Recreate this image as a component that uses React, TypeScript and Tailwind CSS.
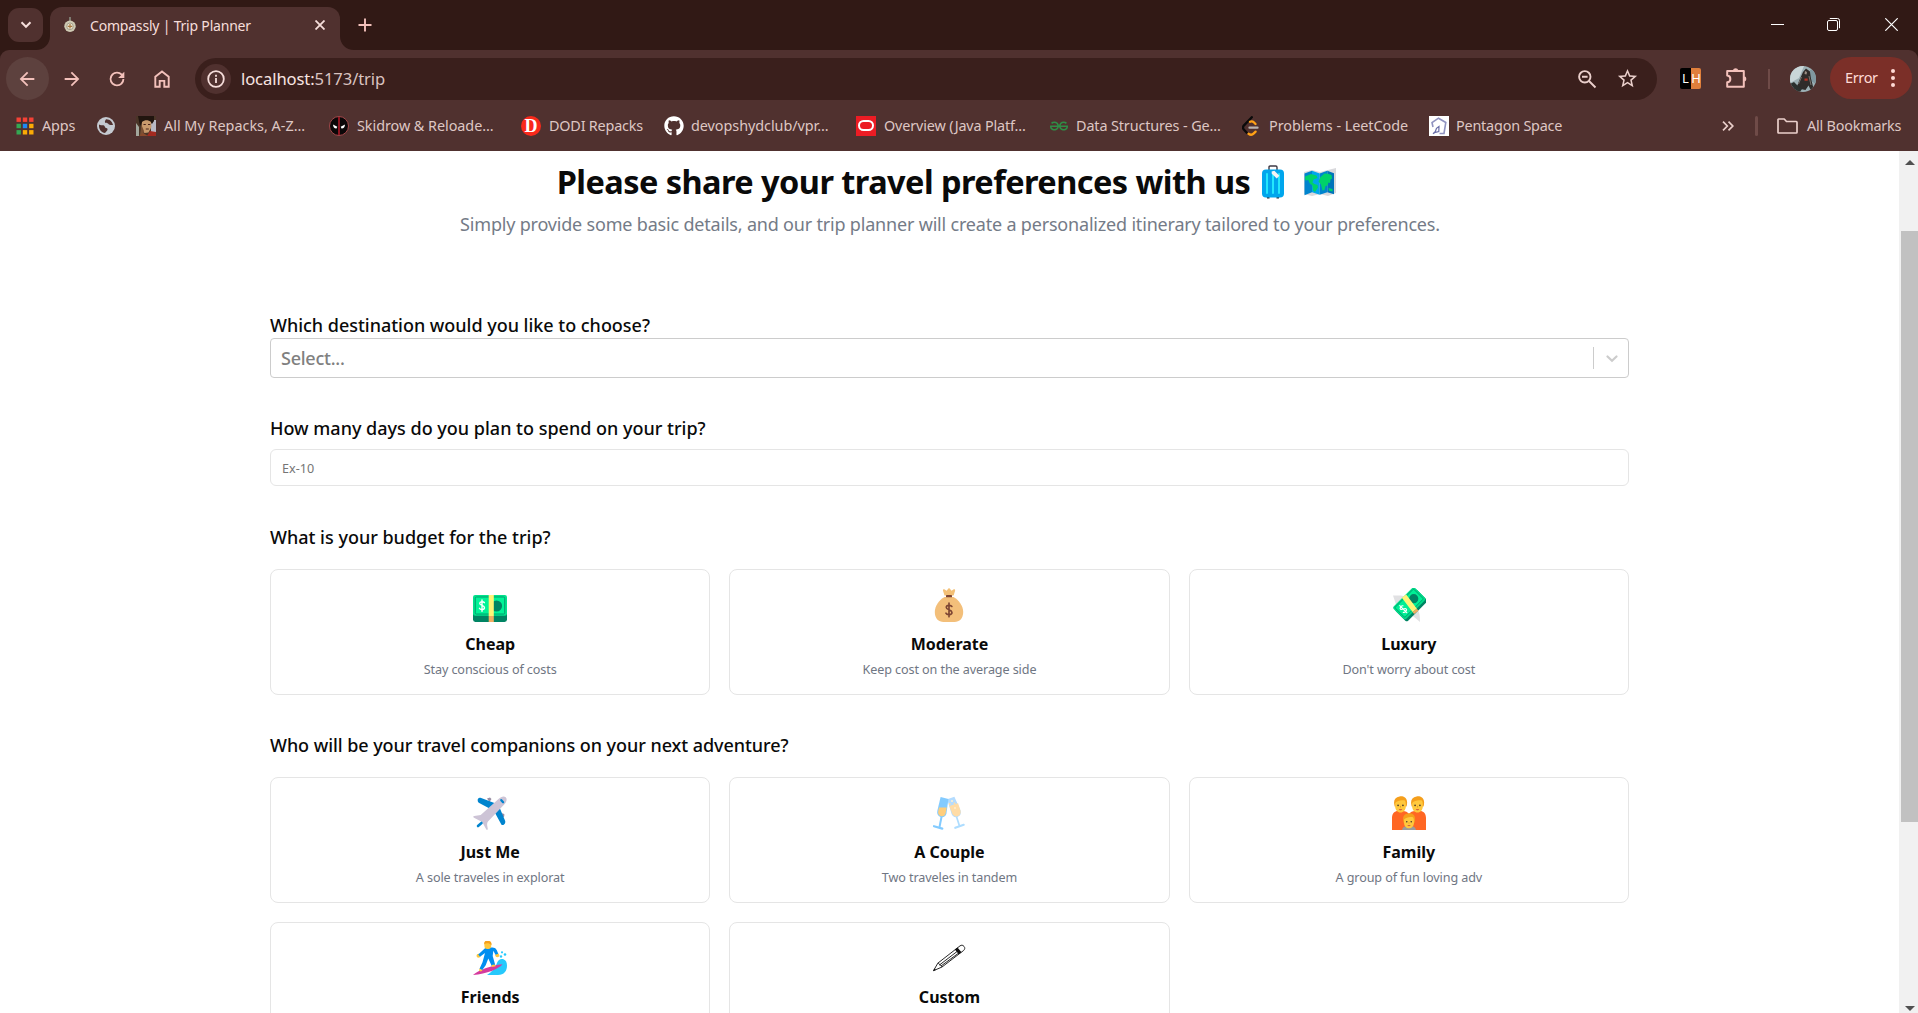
import React from 'react';
import { FaGithub } from 'react-icons/fa';
import { SiGeeksforgeeks } from 'react-icons/si';

/* ---------- emoji artwork, each on a 34 x 34 grid ---------- */

const Art = ({ children }: { children: React.ReactNode }) => (
  <svg viewBox="0 0 34 34" className="block h-[34px] w-[34px] shrink-0">
    {children}
  </svg>
);

const DollarMark = ({ x, y, s, color }: { x: number; y: number; s: number; color: string }) => (
  <g transform={`translate(${x} ${y}) scale(${s})`} fill="none" stroke={color} strokeWidth="1.5" strokeLinecap="round">
    <path d="M2.6 -3.2C1.8 -4.6 -2.4 -4.8 -2.5 -2.4C-2.6 0 2.7 -.3 2.7 2.3C2.7 4.8 -1.9 4.7 -2.8 2.9M0 -6.2V6.2" />
  </g>
);

const Suitcase = () => (
  <Art>
    <path d="M13 6V2.200c0-.7.4-1.200 1.200-1.200h5.600c.8 0 1.200.5 1.200 1.200V6" fill="none" stroke="#3f3a45" strokeWidth="1.400" />
    <path d="M10.500 31h3v2.600h-2.400zM20.500 31h3l-.6 2.600h-2.400z" fill="#2b2730" />
    <rect x="6" y="4.600" width="22" height="27.800" rx="4" fill="#00a6ed" />
    <path d="M11 9v19M17 9v19M23 9v19" stroke="#26eafc" strokeWidth="1.900" strokeLinecap="round" />
    <path d="M15.600 6.600l2.800-.8 5 5-2.600 2.800-5-4.900z" fill="#f4f4f4" />
  </Art>
);

const WorldMap = () => (
  <Art>
    <path d="M1 7l8-2 8 2 8-2 8-2v25l-8 3-8-2-8 2-8-2z" fill="#d9d9dc" />
    <path d="M1.500 8.500L9 5.800v21.400l-7.500 3z" fill="#0084ce" />
    <path d="M9 5.800l7.700 2.700v21.200L9 27.200z" fill="#00a6ed" />
    <path d="M16.700 8.500l7.600-2.700v21.400l-7.600 2.500z" fill="#0084ce" />
    <path d="M24.300 5.800l6.700 2.400v21l-6.700-2z" fill="#0074ba" />
    <path d="M2 11.500l6-2.500 5.500 1.500 1 2.500-4 1.500-1 3 2 1.500 3 1 .5 2.500-3 4.500-2-1.500-.6-5-2.600-2-1.500-3.500-3 .5zM17.500 12l4-3.500 3.500.2 3.500 1.300.5 3.500-1.500 1-.5 3.500-1.500-.5-1 3-2 .5-1 4-2 .5-1.500-6-2.500-3zM25.500 23l4 1v2.500l-3.500-.8z" fill="#00d26a" />
  </Art>
);

const Cash = () => (
  <Art>
    <rect x="0" y="10" width="34" height="24" rx="2.400" fill="#008463" />
    <rect x="0" y="7" width="34" height="20.800" rx="2.200" fill="#00e28c" />
    <rect x="2.300" y="9" width="29.400" height="17" rx="1.200" fill="#00f397" stroke="#00a06f" strokeWidth="1" />
    <circle cx="23.500" cy="18" r="5.600" fill="#008463" />
    <rect x="15.700" y="7" width="5.100" height="21" fill="#fff478" />
    <rect x="15.700" y="28" width="5.100" height="6" fill="#f3ad61" />
    <DollarMark x={9} y={17.600} s={0.920} color="#ffffff" />
  </Art>
);

const MoneyBag = () => (
  <Art>
    <path d="M12.500 7.500L11 2.700c-.3-1.200.8-1.700 1.700-1.100l1.900 1.200 1.600-2c.5-.6 1.200-.6 1.700 0l1.600 2 1.900-1.200c.9-.6 2 0 1.700 1.100l-1.500 4.800z" fill="#f3c077" />
    <path d="M12.500 9h9C27 12 31.200 18 31.200 24c0 6.500-3.700 10-8.700 10h-11C6.500 34 2.800 30.500 2.800 24 2.800 18 7 12 12.500 9z" fill="#f3bf7a" />
    <rect x="14" y="7" width="6" height="2.300" rx=".6" fill="#7d4533" />
    <DollarMark x={17} y={22} s={1.100} color="#7d4533" />
  </Art>
);

const FlyingMoney = () => (
  <Art>
    <path d="M1 7.500c4 0 6.500-.3 9.500.2l15.600 14.800c1.500 2 1.900 6 1.900 11.500l-6.500-5.500L4 16.500z" fill="#e1e1e3" />
    <g transform="translate(17.700 15.800) rotate(-45)">
      <rect x="-15" y="-6.200" width="30" height="17" rx="2" fill="#008463" />
      <rect x="-15" y="-9.400" width="30" height="17.600" rx="2" fill="#00dc89" />
      <rect x="-13.200" y="-7.800" width="26.400" height="14" rx="1" fill="#00ef95" stroke="#009f6e" strokeWidth=".9" />
      <circle cx="6.500" cy="-.8" r="4.600" fill="#008463" />
      <g transform="rotate(8)">
        <rect x="-2.600" y="-9.600" width="5.400" height="17.800" fill="#fff478" />
        <rect x="-2.600" y="8.200" width="5.400" height="2.600" fill="#f3ad61" />
      </g>
      <DollarMark x={-8.300} y={-.8} s={0.800} color="#ffffff" />
    </g>
  </Art>
);

const Plane = () => (
  <Art>
    <path d="M14 2.500l3-.9 1.500 1.500-2 3zM29.500 17l2 1.500-.5 2.500-3-.5z" fill="#998ea4" />
    <path d="M24 8L7.500 1.800C5.500 1.200 4.500 3 4.700 4.500c.1 1.300.8 2.200 2 2.700L17.500 13zM25.500 9l6.500 15.500c.9 2-.3 4.500-2.200 4.500-1 0-1.600-.6-2-1.600L21.500 16z" fill="#0084ce" />
    <path d="M25.500 3c2.500-2.400 5.500-3.200 7.200-1.700 1.700 1.600 1 4.500-1.500 7.200L15 25.500c-.9 1-1 2.200-.8 4l.6 3.500c.1.900-.9 1.200-1.500.5L9.200 26 1 21.800C0 21.200 0 20.300 1.200 20l6.500-1z" fill="#cdc4d6" />
    <path d="M8.500 27L5 30" stroke="#0084ce" strokeWidth="2.600" strokeLinecap="round" />
    <path d="M28.300 4.200l1.800 2" stroke="#0084ce" strokeWidth="2.300" strokeLinecap="round" />
  </Art>
);

const Glasses = () => (
  <Art>
    <path d="M24.300 20l3.200 10" stroke="#aeddff" strokeWidth="1.700" />
    <path d="M23.300 31.800l8.400-3" stroke="#aeddff" strokeWidth="2.200" strokeLinecap="round" />
    <path d="M15.200 3.300L22.400.7l6.200 13.800c.8 3.200-.4 5.700-3.200 6.500-2.800.8-5-.8-5.800-3z" fill="#b4dcff" />
    <path d="M17.300 10l8.800-2.800 2.400 7.500c.5 2.800-.6 4.800-3 5.500-2.500.7-4.500-.7-5.300-2.700z" fill="#ffdca6" />
    <path d="M9.700 20L7.500 31" stroke="#83cbff" strokeWidth="2" />
    <path d="M2 30.200l8.300 2.400" stroke="#83cbff" strokeWidth="2.200" strokeLinecap="round" />
    <path d="M8.600 1l7.800 2-2 14.800c-.8 2.600-3 3.800-5.600 3.200-2.800-.7-4.100-3-3.500-6z" fill="#83cbff" />
    <path d="M7 11.500h7.800l-1.300 6.300c-.6 2-2.400 2.900-4.400 2.400-2.200-.5-3.300-2.300-2.900-4.700z" fill="#ffce7c" />
    <circle cx="20" cy="5" r="1" fill="#fff1d0" />
    <circle cx="17.700" cy="8" r=".9" fill="#ffdca6" />
    <circle cx="22.500" cy="7.500" r="1" fill="#ffdca6" />
    <circle cx="23" cy="12" r=".9" fill="#fff1d0" />
  </Art>
);

const Face = ({ x, y, s }: { x: number; y: number; s: number }) => (
  <g transform={`translate(${x} ${y}) scale(${s})`}>
    <path d="M-6.300 1C-7.500-4-5.500-7 -1-7.700 1-8.500 6.500-8 6.800-2c.1 2-.3 3.500-.6 4.500H-6z" fill="#f59f1c" />
    <path d="M-5.500-1C-3.500-3.800 2-4.500 4.500-3.500 5.400-2.500 5.600 0 5.500 2.500 5.500 6 3 8.700 0 8.700S-5.500 6-5.500 2.500z" fill="#ffc83d" />
    <circle cx="-2.500" cy="1.400" r=".9" fill="#4b3a2a" />
    <circle cx="2.500" cy="1.400" r=".9" fill="#4b3a2a" />
    <path d="M0 2v1.600" stroke="#e59f20" strokeWidth="1" />
    <path d="M-1.700 5.400h3.400c-.3 1.300-3.100 1.300-3.400 0z" fill="#c9443f" />
  </g>
);

const Family = () => (
  <Art>
    <path d="M0 34V22c0-4.500 2.600-7 6-7h5c2.500 0 4.600 1 6 3 1.400-2 3.500-3 6-3h5c3.400 0 6 2.500 6 7v12z" fill="#ff6723" />
    <Face x={8.500} y={8} s={0.970} />
    <Face x={25.500} y={8} s={0.970} />
    <path d="M10 34c.5-3 3-4.300 7-4.300s6.500 1.300 7 4.300z" fill="#9b9b9b" />
    <Face x={17} y={24.500} s={0.900} />
  </Art>
);

const Surfer = () => (
  <Art>
    <path d="M14 34c5-3 8.500-7 10-12 1.200-3.500 4-4.700 6.500-3.800C33 19 34 21.500 34 24.500c0 5.500-3 9.500-9 9.500z" fill="#26c9fc" />
    <circle cx="29" cy="11.300" r="1.100" fill="#26c9fc" />
    <circle cx="32" cy="13.500" r="1.300" fill="#26c9fc" />
    <circle cx="28" cy="15.500" r="1.200" fill="#26c9fc" />
    <path d="M0 34c5-4.500 18-9.500 29.500-10.700-3 4.200-16 10-29.500 10.700z" fill="#d53a9d" />
    <circle cx="5.500" cy="14.800" r="2" fill="#ffc83d" />
    <circle cx="24.300" cy="14.300" r="2" fill="#ffc83d" />
    <path d="M15 6.500h4.500c3.500 0 4.700 3 5.700 6.300l-2.700.9-2.200-4-.6 5.300 2.600 9.300-3.600.6-3.400-7.300-2.600 6.700-3.600 5-2.600-1.500 3-6.600L12 12l-5 3.700-1.800-2.300 6-5.400c1-1 2.300-1.500 3.800-1.500z" fill="#008ef0" />
    <path d="M6.500 27.500l3 1.800-1.500 1.200-2-.7zM18.500 24l3.200-.5 1 1.700-3.600.8z" fill="#ffc83d" />
    <rect x="11.400" y="0" width="6.800" height="8" rx="3" fill="#ffc83d" />
    <path d="M11.200 3.500C11-.2 13-.5 15-.2c2.500.2 4 1.500 3.400 4.500C16 2 13.500 1.700 11.200 3.500z" fill="#f59f1c" />
  </Art>
);

const Pencil = () => (
  <Art>
    <g fill="none" stroke="#111" strokeWidth=".9">
      <path d="M1.500 29.700l4.300-7.500L28 4.900c1.500-1.100 2.800-.9 4 .5s.9 2.800-.4 4.100L10 26z" fill="#fff" />
      <path d="M5.800 22.200c1.300.2 1.700.8 1.800 1.700 1.100.2 2 .8 2.400 2.100M7.600 23.900L25.200 10.400M9 25L27 11.800" />
    </g>
    <path d="M22.800 8.600l2.700-2.100 4 4.700-2.700 2.100zM1 30l1.400-2.600 1.600 1.700z" fill="#111" />
  </Art>
);

/* ---------- browser chrome ---------- */

const Mat = ({ d, className }: { d: string; className?: string }) => (
  <svg viewBox="0 0 24 24" fill="currentColor" className={className ?? 'mr-px h-[22px] w-[22px]'}>
    <path d={d} />
  </svg>
);

const AppsGrid = () => (
  <svg viewBox="0 0 18 18" className="h-[18px] w-[18px]">
    {['#f44236', '#f44236', '#f44236', '#34a853', '#1e88f5', '#fbab05', '#34a853', '#fbab05', '#fbab05'].map((c, i) => (
      <rect key={i} x={0.500 + (i % 3) * 6.300} y={0.500 + Math.floor(i / 3) * 6.300} width="4.400" height="4.400" fill={c} />
    ))}
  </svg>
);

const Globe = () => (
  <svg viewBox="0 0 18 18" className="h-[18px] w-[18px]">
    <circle cx="9" cy="9" r="9" fill="#c5cad1" />
    <path d="M2 7.500C3.500 8.500 5 8 6.500 8.300 8 8.800 7.500 10.500 9 11c1.500.3 2 1 1.200 2.500-.7 1-1.500 1.800-2.200 2.500C4.500 15.500 2 12.500 2 9zM9 2.200C8.500 3.500 7.500 4 8 5.200c.8 1.300 2.500.5 3.300 1.500.8 1.300 2.400 1.400 4.700 1.300C15.500 5 13 2 9 2.200z" fill="#50312f" />
  </svg>
);

const Portrait = () => (
  <svg viewBox="0 0 20 20" className="h-5 w-5">
    <rect width="20" height="20" fill="#4a3527" />
    <path d="M15 4h5v16h-5z" fill="#b9bac6" />
    <path d="M0 7l3 4v9H0z" fill="#a3a79d" />
    <path d="M2 0h16v5l-2 3-3-3-6 0-3 5z" fill="#21150f" />
    <path d="M6 6c3-2.500 6.500-2 9 0l.5 5-3 5.500-4 .5-3-4z" fill="#c99a6d" />
    <path d="M5.500 9L8 15l-1 4H4z" fill="#7b4f33" />
    <path d="M11 20l3-5 6 1v4z" fill="#a32a20" />
    <path d="M3 20l4-3 5 3z" fill="#8a4a2c" />
    <path d="M7.500 8.500h2.300M12 8.500h2.300M9.800 13h3" stroke="#4a241b" strokeWidth="1" />
  </svg>
);

const Mask = () => (
  <svg viewBox="0 0 20 20" className="h-5 w-5">
    <circle cx="10" cy="10" r="9.500" fill="#0b0708" stroke="#a3474a" strokeWidth="1" />
    <path d="M9 1h2v18H9z" fill="#8d1420" />
    <path d="M4 8.500l4.300 2.300-.8 1.800c-2 .2-3.300-1.300-3.500-4.100zM16 8.500l-4.300 2.300.8 1.800c2 .2 3.300-1.300 3.500-4.100z" fill="#fff" />
  </svg>
);

const Dodi = () => (
  <span className="flex h-5 w-5 items-center justify-center rounded-full bg-[#f9291b] font-['Liberation_Serif',serif] text-[18px] leading-none font-bold text-white">
    D
  </span>
);

const Oracle = () => (
  <span className="flex h-5 w-5 items-center justify-center bg-[#ec1c24]">
    <span className="h-[11px] w-4 rounded-full border-2 border-white" />
  </span>
);

const Leet = () => (
  <svg viewBox="0 0 18 20" className="h-5 w-[18px]" fill="none" strokeWidth="2.300" strokeLinecap="round">
    <path d="M9.800 1.200L1.800 9.600c-1 1.200-1 2.700 0 3.900l3 3.200" stroke="#0a0a0a" />
    <path d="M8 5.800c1.500-.8 2.700-.6 3.800.5l1.700 1.700M6.500 17.800c1.700 1.200 4 1 5.300-.4l1.800-1.800" stroke="#ffa116" />
    <path d="M7.500 11.700h8" stroke="#b9b3b1" />
  </svg>
);

const PentagonLogo = () => (
  <svg viewBox="0 0 20 20" className="h-5 w-5" fill="none">
    <rect width="20" height="20" fill="#fff" />
    <path d="M4 11L3 6.500l6.500-4.300 7.300 4.300L15 17.500h-4.500" stroke="#9093c0" strokeWidth="1.600" />
    <path d="M4 17.800l2.300-1.500 3.500-.8.200-5-2.500 1.800-1.300 3.500z" stroke="#6a6ea8" strokeWidth="1.200" />
  </svg>
);

const bookmarks = [
  { icon: <AppsGrid />, text: 'Apps', slot: 'w-[81px]', box: 'w-[18px]', track: 'tracking-[-0.1px]' },
  { icon: <Globe />, text: '', slot: 'w-[39px]', box: 'w-[18px]', track: '' },
  { icon: <Portrait />, text: 'All My Repacks, A-Z...', slot: 'w-[193px]', box: 'w-5', track: '' },
  { icon: <Mask />, text: 'Skidrow & Reloade...', slot: 'w-[192px]', box: 'w-5', track: 'tracking-[-0.05px]' },
  { icon: <Dodi />, text: 'DODI Repacks', slot: 'w-[143px]', box: 'w-5', track: 'tracking-[-0.2px]' },
  { icon: <FaGithub className="h-5 w-5 text-white" />, text: 'devopshydclub/vpr...', slot: 'w-[192px]', box: 'w-5', track: 'tracking-[-0.05px] -ml-px' },
  { icon: <Oracle />, text: 'Overview (Java Platf...', slot: 'w-[193px]', box: 'w-5', track: 'tracking-[-0.15px]' },
  { icon: <SiGeeksforgeeks className="h-[18px] w-[18px] text-[#2f8d46]" />, text: 'Data Structures - Ge...', slot: 'w-[192px]', box: 'w-5', track: 'tracking-[-0.12px] -ml-px' },
  { icon: <Leet />, text: 'Problems - LeetCode', slot: 'w-[188px]', box: 'w-5', track: 'tracking-[-0.05px]' },
  { icon: <PentagonLogo />, text: 'Pentagon Space', slot: 'w-[160px]', box: 'w-5', track: 'tracking-[-0.2px] -ml-px' },
];

function TabStrip() {
  return (
    <div className="flex h-[50px] shrink-0 bg-[#311915]">
      <div className="mt-2 ml-2 flex h-[34px] w-[35px] items-center justify-center rounded-[11px] bg-[#50312f]">
        <svg viewBox="0 0 12 8" className="h-2 w-3" fill="none" stroke="#f6dedb" strokeWidth="2">
          <path d="M1.500 1.300L6 5.800l4.500-4.500" />
        </svg>
      </div>
      <div className="relative mt-[7px] ml-[7px] flex h-[43px] w-[290px] items-center rounded-t-[12px] bg-[#50312f]">
        <svg viewBox="0 0 14 14" className="absolute bottom-0 -left-[14px] h-[14px] w-[14px] fill-[#50312f]"><path d="M14 0v14H0C8 14 14 8 14 0z" /></svg>
        <svg viewBox="0 0 14 14" className="absolute -right-[14px] bottom-0 h-[14px] w-[14px] fill-[#50312f]"><path d="M0 0v14h14C6 14 0 8 0 0z" /></svg>
        <svg viewBox="0 0 14 16" className="mb-2 ml-[13px] h-4 w-[14px]">
          <path d="M7 0v4" stroke="#7d7a70" strokeWidth="2" />
          <circle cx="7" cy="9.300" r="5.700" fill="#cfcab4" />
          <circle cx="7" cy="9.300" r="3.300" fill="#e9e3cf" stroke="#8a8573" strokeWidth=".7" />
          <path d="M7 7v4.600M4.700 9.300h4.600" stroke="#a5763f" strokeWidth="1.200" />
        </svg>
        <span className="mb-[5px] ml-[13px] text-[14px] leading-5 tracking-[-0.2px] text-[#f6dedb]">Compassly | Trip Planner</span>
        <svg viewBox="0 0 10 10" className="mr-[15px] mb-[7px] ml-auto h-[10px] w-[10px]" stroke="#f6dedb" strokeWidth="1.800">
          <path d="M.5.5l9 9M9.500.5l-9 9" />
        </svg>
      </div>
      <svg viewBox="0 0 14 14" className="mt-[18px] ml-[18px] h-[14px] w-[14px]" stroke="#f3c1bb" strokeWidth="1.900">
        <path d="M7 .5v13M.5 7h13" />
      </svg>
      <div className="mt-[18px] mr-5 ml-auto flex text-white">
        <svg viewBox="0 0 13 13" className="h-[13px] w-[13px]" stroke="currentColor"><path d="M0 6.500h13" /></svg>
        <svg viewBox="0 0 13 13" className="mr-[45px] ml-[43px] h-[13px] w-[13px]" fill="none" stroke="currentColor">
          <rect x=".5" y="2.500" width="10" height="10" rx="1.500" />
          <path d="M2.800.5h7.700a2 2 0 012 2v7.700" />
        </svg>
        <svg viewBox="0 0 13 13" className="h-[13px] w-[13px]" stroke="currentColor" strokeWidth="1.200"><path d="M.3.3l12.400 12.400M12.700.3L.3 12.700" /></svg>
      </div>
    </div>
  );
}

function Toolbar() {
  return (
    <div className="flex h-[50px] items-center pt-[7px] pl-[5px] text-[#f3c1bb]">
      <div className="flex h-[43px] w-[45px] items-center justify-center">
        <span className="flex h-[43px] w-[43px] items-center justify-center rounded-full bg-[#5d413e]">
          <Mat d="M20 11H7.830l5.590-5.590L12 4l-8 8 8 8 1.410-1.410L7.830 13H20v-2z" />
        </span>
      </div>
      <div className="flex w-[45px] justify-center">
        <Mat d="M4 11h12.170l-5.590-5.590L12 4l8 8-8 8-1.410-1.410L16.170 13H4v-2z" />
      </div>
      <div className="flex w-[45px] justify-center">
        <Mat d="M17.650 6.350A7.960 7.960 0 0012 4a8 8 0 108 8h-2a6 6 0 11-1.600-4.070L13.200 11H20V4z" />
      </div>
      <div className="flex w-[45px] justify-center">
        <svg viewBox="0 0 16 18" className="mr-px h-[18px] w-4" fill="none" stroke="currentColor" strokeWidth="1.900">
          <path d="M1.300 16.700V6.800L8 1.400l6.700 5.400v9.900h-4.400v-5.800H5.700v5.800z" />
        </svg>
      </div>
      <div className="ml-[10px] flex h-[42px] w-[1462px] items-center rounded-full bg-[#3a1f1c] pr-[18px] pl-[6px] text-[#eacfcb]">
        <span className="flex h-[30px] w-[30px] items-center justify-center rounded-full bg-[#50312f]">
          <svg viewBox="0 0 18 18" className="h-[18px] w-[18px]" fill="none" stroke="#f6dedb" strokeWidth="1.800">
            <circle cx="9" cy="9" r="7.800" />
            <path d="M9 8v5M9 4.800v1.900" />
          </svg>
        </span>
        <span className="mt-px ml-[10px] text-[16.600px] leading-6 tracking-[-0.1px] text-[#d9c3c0]">
          <span className="text-[#f8e4e1]">localhost:</span>5173/trip
        </span>
        <svg viewBox="0 0 20 20" className="mr-[19px] ml-auto h-5 w-5" fill="none" stroke="currentColor" strokeWidth="1.900">
          <circle cx="7.800" cy="7.800" r="5.700" />
          <path d="M12 12l6.500 6.500M5 7.800h5.600" />
        </svg>
        <Mat className="h-[23px] w-[23px]" d="M22 9.240l-7.190-.62L12 2 9.190 8.630 2 9.240l5.460 4.730L5.820 21 12 17.270 18.180 21l-1.630-7.030L22 9.240zM12 15.400l-3.760 2.270 1-4.280-3.320-2.880 4.380-.38L12 6.100l1.710 4.040 4.380.38-3.320 2.880 1 4.280L12 15.400z" />
      </div>
      <span className="ml-[23px] flex h-[21px] w-[21px] text-[13px] leading-[21px] text-white">
        <span className="w-[11px] rounded-l-[2px] bg-black text-center">L</span>
        <span className="w-[10px] rounded-r-[2px] bg-[#e07f3c] text-center">H</span>
      </span>
      <svg viewBox="0 0 22 22" className="mb-[2px] ml-[25px] h-[22px] w-[22px]" fill="none" stroke="currentColor" strokeWidth="2" strokeLinejoin="round">
        <path d="M1.200 4h16.600v15.800H1.200v-4.500c4.200-.4 4.200-6.400 0-6.800z" />
        <path d="M7.800 3.500a1.900 1.900 0 013.600 0M18.300 10.200a1.900 1.900 0 010 3.400" fill="currentColor" />
      </svg>
      <span className="ml-5 h-5 w-[2px] bg-[#6f4b48]" />
      <svg viewBox="0 0 26 26" className="ml-5 h-[26px] w-[26px] rounded-full">
        <rect width="26" height="26" fill="#9cb0b5" />
        <path d="M0 0h14L9 12 0 17z" fill="#c9d6d8" />
        <path d="M20 4h6v14l-5-3z" fill="#7f98a0" />
        <path d="M13 6l3-3.500 4 3 1 7 2.500 10-3 1-2-4-3 4.500-5-1L5 26l4-11z" fill="#2f2c2a" />
        <path d="M0 18l4-2 3 3 5 4-2 3H0z" fill="#2a302e" />
        <path d="M15 5l2 1-.5 2.500-2-.5z" fill="#9c8f86" />
        <path d="M14.500 12.500h3.200v2.200h-3.200z" fill="#b33427" />
        <path d="M11.500 11l-3 7M19 10l2 9" stroke="#77736e" strokeWidth="1" />
      </svg>
      <div className="mb-[1px] ml-[14px] flex h-[42px] w-[82px] items-center rounded-full bg-[#7b2f28] pl-[15px] text-[14.500px] tracking-[-0.35px] text-[#ffdad5]">
        Error
        <span className="ml-[13px] flex flex-col gap-[3px]">
          <span className="h-[4px] w-[4px] rounded-full bg-[#ffdad5]" />
          <span className="h-[4px] w-[4px] rounded-full bg-[#ffdad5]" />
          <span className="h-[4px] w-[4px] rounded-full bg-[#ffdad5]" />
        </span>
      </div>
    </div>
  );
}

function BookmarksBar() {
  return (
    <div className="flex h-[51px] items-center pl-4 text-[14.400px] text-[#dec7c4]">
      {bookmarks.map((b, i) => (
        <div key={i} className={`flex h-5 shrink-0 items-center gap-2 ${b.slot}`}>
          <span className={`flex shrink-0 justify-center ${b.box}`}>{b.icon}</span>
          <span className={`whitespace-nowrap ${b.track}`}>{b.text}</span>
        </div>
      ))}
      <svg viewBox="0 0 12 10" className="ml-[133px] h-[10px] w-3" fill="none" stroke="#eacfcb" strokeWidth="1.700">
        <path d="M1 .7L5.300 5 1 9.300M6.500.7L10.800 5 6.500 9.300" />
      </svg>
      <span className="ml-[21px] h-5 w-[3px] rounded bg-[#6f4b48]" />
      <svg viewBox="0 0 21 16" className="ml-[19px] h-4 w-[21px]" fill="none" stroke="#eacfcb" strokeWidth="1.700" strokeLinejoin="round">
        <path d="M1.500 1h5.700l2.300 2.500h9.700c.5 0 .8.300.8.800v9.900c0 .5-.3.800-.8.800H1.800c-.5 0-.8-.3-.8-.8V1.500z" />
      </svg>
      <span className="ml-[9px] tracking-[-0.2px] whitespace-nowrap">All Bookmarks</span>
    </div>
  );
}

/* ---------- trip form ---------- */

const budgets = [
  { art: <Cash />, title: 'Cheap', desc: 'Stay conscious of costs' },
  { art: <MoneyBag />, title: 'Moderate', desc: 'Keep cost on the average side' },
  { art: <FlyingMoney />, title: 'Luxury', desc: "Don't worry about cost" },
];

const companions = [
  { art: <Plane />, title: 'Just Me', desc: 'A sole traveles in explorat' },
  { art: <Glasses />, title: 'A Couple', desc: 'Two traveles in tandem' },
  { art: <Family />, title: 'Family', desc: 'A group of fun loving adv' },
  { art: <Surfer />, title: 'Friends', desc: '' },
  { art: <Pencil />, title: 'Custom', desc: '' },
];

const Question = ({ children, className }: { children: React.ReactNode; className: string }) => (
  <h2 className={`text-[18px] leading-[27px] font-medium text-[#0a0a0a] ${className}`}>{children}</h2>
);

const Options = ({ items }: { items: typeof budgets }) => (
  <div className="mt-[18px] grid grid-cols-3 gap-[19px]">
    {items.map((o) => (
      <div key={o.title} className="flex h-[126px] flex-col items-center rounded-[8px] border border-[#e5e5e5] pt-[18px]">
        {o.art}
        <h3 className="mt-[10px] text-[16px] leading-6 font-bold text-[#0a0a0a]">{o.title}</h3>
        <p className="mt-1 text-[12.600px] leading-5 tracking-[-0.1px] text-[#6f7683]">{o.desc}</p>
      </div>
    ))}
  </div>
);

export default function App() {
  return (
    <div className="flex h-[1013px] w-[1918px] flex-col overflow-hidden bg-white font-['Noto_Sans','Open_Sans',sans-serif]">
      <div className="shrink-0 bg-[#311915]">
        <TabStrip />
        <div className="h-[101px] rounded-t-[9px] bg-[#50312f]">
          <Toolbar />
          <BookmarksBar />
        </div>
      </div>
      <div className="flex min-h-0 flex-1">
        <main className="flex-1 overflow-hidden pt-[11px]">
          <div className="flex h-10 items-center justify-center pr-[5px]">
            <h1 className="text-[32.500px] leading-10 font-bold tracking-[-0.55px] text-[#0a0a0a]">Please share your travel preferences with us</h1>
            <span className="ml-[6px] flex gap-[13px]">
              <Suitcase />
              <WorldMap />
            </span>
          </div>
          <p className="mt-2 pl-px text-center text-[18px] leading-7 tracking-[-0.19px] text-[#747b87]">
            Simply provide some basic details, and our trip planner will create a personalized itinerary tailored to your preferences.
          </p>
          <div className="mx-auto mt-[74px] w-[1359px]">
            <Question className="-mb-px tracking-[-0.02px]">Which destination would you like to choose?</Question>
            <div className="flex h-10 items-center rounded-[4px] border border-[#cccccc] pl-[10px] text-[18px] font-medium tracking-[-0.24px] text-[#808080]">
              Select...
              <span className="ml-auto h-[22px] w-px bg-[#cccccc]" />
              <svg viewBox="0 0 12 8" className="mt-px mr-[10px] ml-3 h-2 w-3" fill="none" stroke="#cccccc" strokeWidth="2.200" strokeLinecap="round">
                <path d="M1.500 1.500L6 5.800l4.500-4.300" />
              </svg>
            </div>
            <Question className="mt-[37px]">How many days do you plan to spend on your trip?</Question>
            <div className="mt-[7px] flex h-[37px] items-center rounded-[6px] border border-[#e5e5e5] pt-[3px] pl-[11px] text-[12.600px] text-[#757575]">Ex-10</div>
            <Question className="mt-[38px]">What is your budget for the trip?</Question>
            <Options items={budgets} />
            <Question className="mt-[37px] tracking-[-0.06px]">Who will be your travel companions on your next adventure?</Question>
            <Options items={companions} />
          </div>
        </main>
        <div className="flex w-[19px] flex-col items-center bg-[#f1f1f1] pl-[2px]">
          <svg viewBox="0 0 10 5" className="mt-[9px] h-[5px] w-[10px] fill-[#505050]"><path d="M5 0l5 5H0z" /></svg>
          <div className="mt-[66px] h-[591px] w-[17px] bg-[#c1c1c1]" />
          <svg viewBox="0 0 10 5" className="mt-auto mb-[2px] h-[5px] w-[10px] fill-[#505050]"><path d="M5 5l5-5H0z" /></svg>
        </div>
      </div>
    </div>
  );
}
